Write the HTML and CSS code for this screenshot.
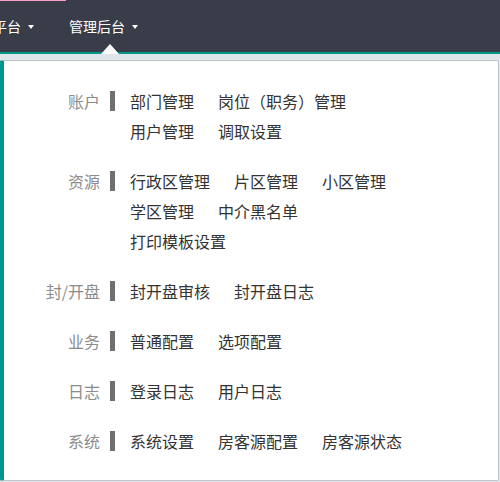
FILE: index.html
```html
<!DOCTYPE html>
<html lang="zh-CN">
<head>
<meta charset="utf-8">
<title>管理后台</title>
<link rel="stylesheet" href="styles.css">
</head>
<body>
<header class="topbar">
  <span class="progress"></span>
  <nav class="nav">
    <a class="nav-item">平台<i class="caret"></i></a>
    <a class="nav-item active">管理后台<i class="caret"></i><span class="pointer"></span></a>
  </nav>
</header>
<div class="panel">
  <div class="group">
    <div class="label">账户</div>
    <span class="bar"></span>
    <div class="links">
      <div class="line"><a>部门管理</a><a>岗位（职务）管理</a></div>
      <div class="line"><a>用户管理</a><a>调取设置</a></div>
    </div>
  </div>
  <div class="group">
    <div class="label">资源</div>
    <span class="bar"></span>
    <div class="links">
      <div class="line"><a>行政区管理</a><a>片区管理</a><a>小区管理</a></div>
      <div class="line"><a>学区管理</a><a>中介黑名单</a></div>
      <div class="line"><a>打印模板设置</a></div>
    </div>
  </div>
  <div class="group">
    <div class="label">封/开盘</div>
    <span class="bar"></span>
    <div class="links">
      <div class="line"><a>封开盘审核</a><a>封开盘日志</a></div>
    </div>
  </div>
  <div class="group">
    <div class="label">业务</div>
    <span class="bar"></span>
    <div class="links">
      <div class="line"><a>普通配置</a><a>选项配置</a></div>
    </div>
  </div>
  <div class="group">
    <div class="label">日志</div>
    <span class="bar"></span>
    <div class="links">
      <div class="line"><a>登录日志</a><a>用户日志</a></div>
    </div>
  </div>
  <div class="group">
    <div class="label">系统</div>
    <span class="bar"></span>
    <div class="links">
      <div class="line"><a>系统设置</a><a>房客源配置</a><a>房客源状态</a></div>
    </div>
  </div>
</div>
</body>
</html>
```

FILE: styles.css
```css
html, body {
  margin: 0;
  padding: 0;
}
body {
  width: 500px;
  height: 482px;
  overflow: hidden;
  background: #dfe5ea;
  font-family: "Noto Sans CJK SC", "Noto Sans", sans-serif;
}
.topbar {
  position: relative;
  height: 52px;
  background: #393d49;
  border-bottom: 2px solid #009688;
}
.progress {
  position: absolute;
  left: 0;
  top: 0;
  width: 66px;
  height: 1px;
  background: #f2a3c6;
}
.nav {
  display: flex;
  height: 52px;
  gap: 35px;
  margin-left: -7px;
}
.nav-item {
  position: relative;
  display: flex;
  align-items: center;
  height: 52px;
  color: #fff;
  font-size: 14px;
  line-height: 20px;
  white-space: nowrap;
}
.caret {
  display: block;
  width: 0;
  height: 0;
  margin-left: 7px;
  margin-top: 2px;
  border-top: 4px solid #fff;
  border-left: 3px solid transparent;
  border-right: 3px solid transparent;
}
.pointer {
  position: absolute;
  left: 32px;
  bottom: -2px;
  width: 0;
  height: 0;
  border-bottom: 10px solid #fff;
  border-left: 9px solid transparent;
  border-right: 9px solid transparent;
}
.panel {
  box-sizing: border-box;
  margin-top: 6px;
  width: 499px;
  height: 421px;
  background: #fff;
  border: 1px solid #bfc4c9;
  border-left: 4px solid #009688;
  border-radius: 2px;
  padding: 25px 0 24px;
  display: flex;
  flex-direction: column;
  gap: 20px;
}
.group {
  display: flex;
  align-items: flex-start;
  font-size: 16px;
  line-height: 30px;
}
.label {
  width: 96px;
  text-align: right;
  color: #8c8c8c;
  white-space: nowrap;
}
.bar {
  width: 5px;
  height: 20px;
  margin: 5px 15px 0 10px;
  background: #6f6f6f;
}
.links {
  display: flex;
  flex-direction: column;
}
.line {
  display: flex;
  gap: 24px;
}
.line a {
  color: #333;
  white-space: nowrap;
}
```
